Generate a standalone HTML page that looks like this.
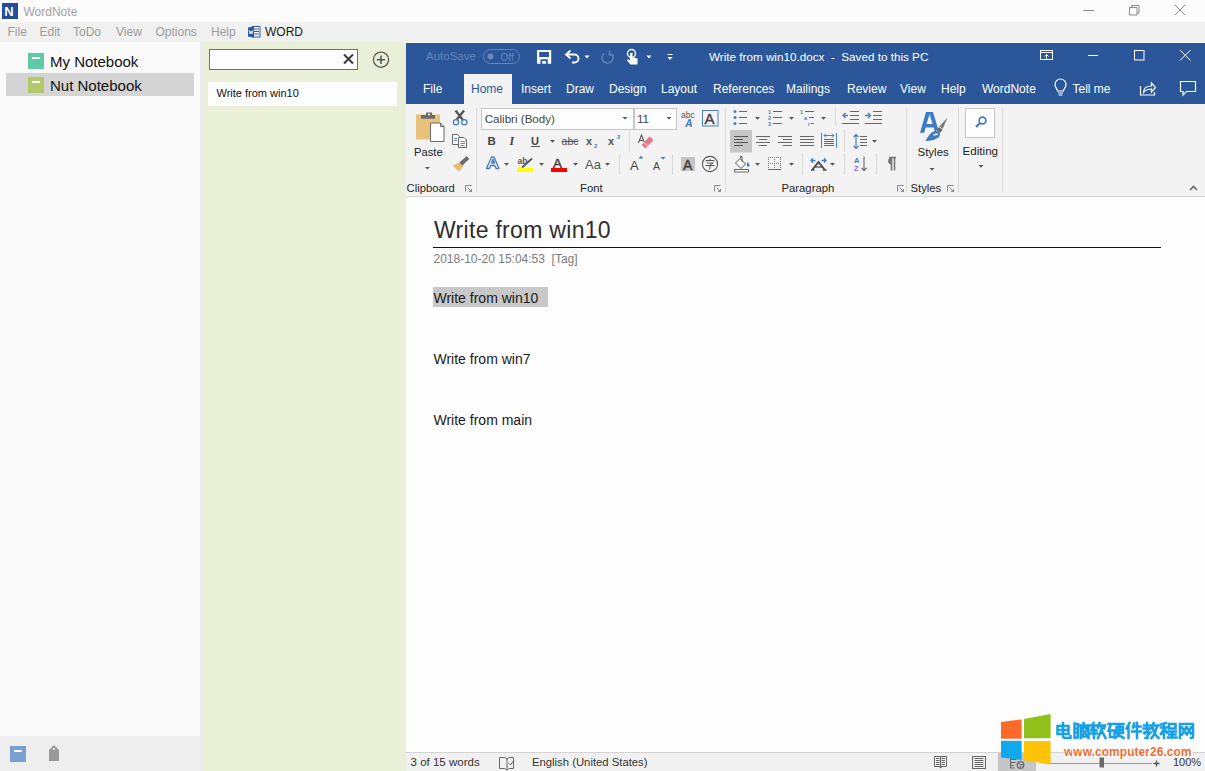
<!DOCTYPE html>
<html><head><meta charset="utf-8">
<style>
*{margin:0;padding:0;box-sizing:border-box}
html,body{width:1205px;height:771px;overflow:hidden;background:#fdfdfd;font-family:"Liberation Sans",sans-serif;position:relative}
.a{position:absolute}
.t{position:absolute;white-space:nowrap;line-height:1}
svg{position:absolute;overflow:visible}
.menu{font-size:12px;color:#9c9c9c;top:25.6px}
.tab{font-size:12px;color:#fff;top:82.8px}
.lbl{font-size:11.3px;color:#262626;top:182.6px}
.sep{position:absolute;width:1px;background:#dadada}
</style></head>
<body>
<!-- ===== WordNote title bar ===== -->
<div class="a" style="left:0;top:0;width:1205px;height:22px;background:#fcfcfc"></div>
<div class="a" style="left:2px;top:3px;width:16px;height:16px;background:#234d9c"></div>
<div class="t" style="left:4.3px;top:5.2px;font-size:13px;font-weight:bold;color:#fff">N</div>
<div class="t" style="left:23.5px;top:5.6px;font-size:12px;color:#a2a2a2">WordNote</div>
<svg style="left:0;top:0" width="1205" height="22">
  <path d="M1083.5 10.5H1094" stroke="#8a8a8a" stroke-width="1"/>
  <path d="M1129.5 7.5h7.5v7.5h-7.5z M1131.5 7.5v-2h7.5v7.5h-2" fill="none" stroke="#8a8a8a" stroke-width="1"/>
  <path d="M1175 5L1185 15M1185 5L1175 15" stroke="#8a8a8a" stroke-width="1"/>
</svg>
<!-- ===== menubar ===== -->
<div class="a" style="left:0;top:22px;width:1205px;height:20px;background:#f0f0f0"></div>
<div class="t menu" style="left:7.5px">File</div>
<div class="t menu" style="left:39.5px">Edit</div>
<div class="t menu" style="left:73px">ToDo</div>
<div class="t menu" style="left:116px">View</div>
<div class="t menu" style="left:155.5px">Options</div>
<div class="t menu" style="left:211px">Help</div>
<svg style="left:0;top:0" width="300" height="42">
  <path d="M252 26.5h8v10.5h-8z" fill="#fff" stroke="#2b579a" stroke-width="1"/>
  <path d="M254 29h5M254 31.5h5M254 34h5" stroke="#2b579a" stroke-width="1"/>
  <path d="M248 27.5l6-1v11l-6-1z" fill="#2b579a"/>
  <path d="M249 30l1 4 1-3 1 3 1-4" fill="none" stroke="#fff" stroke-width="0.8"/>
</svg>
<div class="t" style="left:265px;top:25.6px;font-size:12px;color:#1a1a1a">WORD</div>

<!-- ===== sidebar ===== -->
<div class="a" style="left:0;top:42px;width:200px;height:694px;background:#fafafa"></div>
<div class="a" style="left:200px;top:42px;width:3px;height:729px;background:#ececec"></div>
<div class="a" style="left:28px;top:53px;width:16px;height:16px;background:#5dcaa5"></div>
<div class="a" style="left:32px;top:57px;width:8px;height:2px;background:#fff"></div>
<div class="t" style="left:50px;top:54.3px;font-size:15px;color:#111">My Notebook</div>
<div class="a" style="left:6px;top:73px;width:188px;height:23px;background:#d4d4d4"></div>
<div class="a" style="left:28px;top:77px;width:16px;height:16px;background:#b3c96b"></div>
<div class="a" style="left:32px;top:81px;width:8px;height:2px;background:#fff"></div>
<div class="t" style="left:50px;top:77.9px;font-size:15px;color:#111">Nut Notebook</div>
<div class="a" style="left:0;top:736px;width:200px;height:35px;background:#eeeeee"></div>
<div class="a" style="left:10px;top:746px;width:16px;height:16px;background:#7aa0d2"></div>
<div class="a" style="left:14px;top:750px;width:8px;height:2px;background:#fff"></div>
<svg style="left:0;top:0" width="200" height="771">
  <path d="M49 750l5-5 5 5v11h-10z" fill="#999"/>
  <circle cx="54" cy="749" r="1" fill="#fff"/>
</svg>

<!-- ===== middle panel ===== -->
<div class="a" style="left:203px;top:42px;width:203px;height:729px;background:#e9f0d7"></div>
<div class="a" style="left:209px;top:49px;width:149px;height:21px;background:#fdfdfd;border:1px solid #6f6f6f"></div>
<svg style="left:0;top:0" width="406" height="120">
  <path d="M344 54.5l9 9M353 54.5l-9 9" stroke="#3a3a3a" stroke-width="2"/>
  <circle cx="381" cy="59.7" r="7.6" fill="none" stroke="#5a5a5a" stroke-width="1.3"/>
  <path d="M381 55.5v8.4M376.8 59.7h8.4" stroke="#5a5a5a" stroke-width="1.6"/>
</svg>
<div class="a" style="left:208px;top:82px;width:189px;height:24px;background:#fdfdfd"></div>
<div class="t" style="left:216.5px;top:88.2px;font-size:11px;color:#111">Write from win10</div>

<!-- ===== Word window ===== -->
<div class="a" style="left:406px;top:43px;width:799px;height:61px;background:#2b579a"></div>
<div class="a" style="left:406px;top:104px;width:799px;height:92px;background:#f3f3f3"></div>
<div class="a" style="left:406px;top:196px;width:799px;height:1px;background:#d5d5d5"></div>
<div class="a" style="left:406px;top:197px;width:799px;height:555px;background:#fdfdfd"></div>
<div class="a" style="left:406px;top:752px;width:799px;height:19px;background:#f1f1f1;border-top:1px solid #d3d3d3"></div>


<!-- Word title bar -->
<div class="t" style="left:426px;top:51.2px;font-size:11.5px;color:#6283b9">AutoSave</div>
<div class="a" style="left:483px;top:49px;width:37px;height:15px;border:1px solid #6684b8;border-radius:8px"></div>
<div class="t" style="left:500.5px;top:52.5px;font-size:10px;color:#6a89bd">Off</div>
<svg style="left:0;top:0" width="1205" height="104">
  <circle cx="490.5" cy="56.5" r="3" fill="#6a89bd"/>
  <!-- save -->
  <path d="M537 50h14.2v13.8H537z M539.2 52v5h9.8v-5z M540.5 59.3v4.5h1.8v-2.8h3.6v2.8h1.8v-4.5z" fill="#fff" fill-rule="evenodd"/>
  <!-- undo -->
  <path d="M567 54.5h7.5a4 4 0 0 1 0 8h-2.5" fill="none" stroke="#fff" stroke-width="1.8"/>
  <path d="M570.5 50.5l-4.5 4 4.5 4" fill="none" stroke="#fff" stroke-width="1.8"/>
  <path d="M584.5 55.5h5l-2.5 3z" fill="#fff"/>
  <!-- redo disabled -->
  <path d="M604 53.5a5.5 5.5 0 1 0 7 0" fill="none" stroke="#5f7fb5" stroke-width="1.6"/>
  <path d="M609.5 50.5v4.5h4.5" fill="none" stroke="#5f7fb5" stroke-width="1.6"/>
  <!-- touch -->
  <circle cx="631.5" cy="53.5" r="4" fill="none" stroke="#fff" stroke-width="1.4"/>
  <path d="M630 53.5v7l-2-1.5-1 1.5 3.5 4h7v-6l-5-1.5v-4.5z" fill="#fff"/>
  <path d="M646.5 55.5h5l-2.5 3z" fill="#fff"/>
  <!-- customize -->
  <path d="M667.5 54.5h5" stroke="#fff" stroke-width="1"/>
  <path d="M667.5 57h5l-2.5 3z" fill="#fff"/>
  <!-- controls -->
  <rect x="1040.5" y="50.5" width="12" height="9" fill="none" stroke="#fff" stroke-width="1"/>
  <path d="M1040.5 52.5h12M1046.5 59.5v-5M1044.5 56.5l2-2 2 2" fill="none" stroke="#fff" stroke-width="1"/>
  <path d="M1088 55.5h10" stroke="#fff" stroke-width="1"/>
  <rect x="1134.5" y="50.5" width="9.5" height="9.5" fill="none" stroke="#fff" stroke-width="1"/>
  <path d="M1180 50l10.5 10.5M1190.5 50L1180 60.5" stroke="#fff" stroke-width="1"/>
  <!-- home tab -->
  <rect x="464" y="74" width="48" height="30" fill="#f3f3f3"/>
  <!-- bulb -->
  <path d="M1057.5 91c0-2-2.5-3.5-2.5-6.5a5.5 5.5 0 0 1 11 0c0 3-2.5 4.5-2.5 6.5z" fill="none" stroke="#fff" stroke-width="1.2"/>
  <path d="M1058 93h5M1058.5 95h4" stroke="#fff" stroke-width="1.2"/>
  <!-- share -->
  <path d="M1140.5 86v9h14v-3" fill="none" stroke="#fff" stroke-width="1.2"/>
  <path d="M1143.5 92.5c0-4 3-6.5 8-6.5v-3l4 4.5-4 4.5v-3c-4 0-6 1-8 3.5z" fill="none" stroke="#fff" stroke-width="1.2"/>
  <!-- comment -->
  <path d="M1180.5 81.5h15v10h-9l-3.5 3.5v-3.5h-2.5z" fill="none" stroke="#fff" stroke-width="1.2"/>
</svg>
<div class="t" style="left:709px;top:50.8px;font-size:11.7px;color:#fff">Write from win10.docx&nbsp; - &nbsp;Saved to this PC</div>
<div class="t tab" style="left:423px">File</div>
<div class="t tab" style="left:471px;color:#2b579a">Home</div>
<div class="t tab" style="left:521px">Insert</div>
<div class="t tab" style="left:566px">Draw</div>
<div class="t tab" style="left:609px">Design</div>
<div class="t tab" style="left:661px">Layout</div>
<div class="t tab" style="left:713px">References</div>
<div class="t tab" style="left:786px">Mailings</div>
<div class="t tab" style="left:847px">Review</div>
<div class="t tab" style="left:900px">View</div>
<div class="t tab" style="left:941px">Help</div>
<div class="t tab" style="left:982px">WordNote</div>
<div class="t tab" style="left:1072.5px">Tell me</div>
<!-- ===== RIBBON ===== -->
<svg style="left:0;top:0" width="1205" height="200">
 <g id="clip">
  <rect x="416" y="114.5" width="24" height="25" fill="#e8c17a"/>
  <path d="M421 115h14v3.7h-14z" fill="#6b6b6b"/>
  <path d="M426 115v-2.5h6v2.5z" fill="#6b6b6b"/>
  <circle cx="429" cy="114.6" r="1" fill="#f3f3f3"/>
  <path d="M430.5 123h10l3.5 3.5v15h-13.5z" fill="#fdfdfd" stroke="#6b6b6b" stroke-width="1"/>
  <path d="M440.5 123v3.5h3.5" fill="none" stroke="#6b6b6b" stroke-width="1"/>
  <path d="M425 167h5l-2.5 2.6z" fill="#5a5a5a"/>
  <!-- scissors -->
  <path d="M455.5 110.5l7.5 9.5M464 110.5l-7.5 9.5" stroke="#555" stroke-width="2.3"/>
  <circle cx="456" cy="122.3" r="2.6" fill="none" stroke="#4a7ec0" stroke-width="1.3"/>
  <circle cx="464.4" cy="122.3" r="2.6" fill="none" stroke="#4a7ec0" stroke-width="1.3"/>
  <!-- copy -->
  <path d="M452.5 134.5h5l2 2v8h-7z" fill="#fdfdfd" stroke="#666" stroke-width="1"/>
  <path d="M454 138.5h3M454 140.5h3" stroke="#4a7ec0" stroke-width="0.9"/>
  <path d="M458.5 137.5h5.5l2.5 2.5v7.5h-8z" fill="#fdfdfd" stroke="#666" stroke-width="1"/>
  <path d="M460.5 141.5h4.5M460.5 143.5h4.5M460.5 145.5h4" stroke="#4a7ec0" stroke-width="0.9"/>
  <!-- painter -->
  <path d="M468 157.5l-6 5.5" stroke="#6b6b6b" stroke-width="3.8"/>
  <path d="M461.5 160.5l3 3-3 3-3-3z" fill="#6b6b6b"/>
  <path d="M459.5 162.5l4 4-4.5 5-6.5-6z" fill="#e5bd72"/>
 </g>
 <!-- launchers -->
 <g fill="none" stroke="#8a8a8a" stroke-width="1">
  <path d="M465.5 191.5v-6h6M467.5 187.5l4 4M471.5 189v2.5h-2.5"/>
  <path d="M714.5 191.5v-6h6M716.5 187.5l4 4M720.5 189v2.5h-2.5"/>
  <path d="M897.5 191.5v-6h6M899.5 187.5l4 4M903.5 189v2.5h-2.5"/>
  <path d="M947.5 191.5v-6h6M949.5 187.5l4 4M953.5 189v2.5h-2.5"/>
 </g>
 <!-- separators -->
 <g stroke="#d8d8d8" stroke-width="1">
  <path d="M476.5 108v84M725.5 108v84M906.5 108v84M958.5 108v84M1002.5 108v84"/>
  <path d="M629.5 131v21M619.5 155v20M672.5 155v20"/>
  <path d="M835.5 108v17M844.5 129v23M802.5 153v22M844.5 153v22M876.5 153v22"/>
 </g>
 <!-- font combos -->
 <rect x="481.5" y="108.5" width="152" height="21" fill="#fdfdfd" stroke="#c6c6c6"/>
 <rect x="634.5" y="108.5" width="42" height="21" fill="#fdfdfd" stroke="#c6c6c6"/>
 <path d="M622.5 117h5l-2.5 2.6z" fill="#555"/>
 <path d="M666.5 117h5l-2.5 2.6z" fill="#555"/>
 <!-- abc A -->
 <text x="681" y="118" font-size="8.5" fill="#555" font-family="Liberation Sans">abc</text>
 <text x="685" y="126.5" font-size="10.5" font-weight="bold" font-style="italic" fill="#3f7ac3" font-family="Liberation Sans">A</text>
 <rect x="702.5" y="110.5" width="15.5" height="15.5" fill="none" stroke="#4a7ec0" stroke-width="1"/>
 <text x="704.5" y="124.3" font-size="15" fill="#444" stroke="#444" stroke-width="0.4" font-family="Liberation Sans">A</text>
 <!-- row2 -->
 <text x="487.5" y="145" font-size="11.5" font-weight="bold" fill="#444" font-family="Liberation Sans">B</text>
 <text x="509.5" y="145" font-size="12" font-weight="bold" font-style="italic" fill="#444" font-family="Liberation Serif">I</text>
 <text x="531" y="144.7" font-size="11" font-weight="bold" fill="#444" font-family="Liberation Sans">U</text>
 <path d="M531 146.5h9" stroke="#555" stroke-width="1"/>
 <path d="M550 140h5l-2.5 2.8z" fill="#555"/>
 <text x="561.5" y="145" font-size="10.5" fill="#555" font-family="Liberation Sans" textLength="17">abc</text>
 <path d="M561.5 141.5h17" stroke="#555" stroke-width="1"/>
 <text x="586" y="145.3" font-size="11" font-weight="bold" fill="#555" font-family="Liberation Sans">x</text>
 <text x="594" y="148" font-size="6" font-weight="bold" fill="#4a7ec0" font-family="Liberation Sans">2</text>
 <text x="608" y="145.3" font-size="11" font-weight="bold" fill="#555" font-family="Liberation Sans">x</text>
 <text x="617" y="139" font-size="6" font-weight="bold" fill="#4a7ec0" font-family="Liberation Sans">2</text>
 <!-- eraser -->
 <path d="M638.5 143l3-8 3 8M639.6 140.5h3.8" fill="none" stroke="#555" stroke-width="1.1"/>
 <path d="M649.5 136.5l4 3.5-8 8.5-4-3.5z" fill="#e6788e"/>
 <path d="M643.5 142.3l4 3.6" stroke="#f3f3f3" stroke-width="1"/>
 <!-- row3 -->
 <path d="M486.5 168.5l5-11.5h2.5l5 11.5h-3l-1.2-3h-4.1l-1.2 3z M491.5 163h3l-1.5-3.8z" fill="#e9eff8" stroke="#4a7ec0" stroke-width="1.3" stroke-linejoin="round"/>
 <path d="M504 163h5l-2.5 2.8z" fill="#555"/>
 <text x="517.5" y="163.5" font-size="8.5" font-weight="bold" fill="#555" font-family="Liberation Sans">ab</text>
 <path d="M532 158.5l-10 9" stroke="#5a5a5a" stroke-width="2"/>
 <rect x="517" y="168" width="16" height="4" fill="#ffff00"/>
 <path d="M539 163h5l-2.5 2.8z" fill="#555"/>
 <text x="553" y="168" font-size="13.5" fill="#444" stroke="#444" stroke-width="0.5" font-family="Liberation Sans">A</text>
 <rect x="551" y="168" width="16" height="4" fill="#ff0000"/>
 <path d="M573 163h5l-2.5 2.8z" fill="#555"/>
 <text x="585" y="169" font-size="13" fill="#555" font-family="Liberation Sans">Aa</text>
 <path d="M605 163h5l-2.5 2.8z" fill="#555"/>
 <text x="630" y="170" font-size="13" fill="#444" font-family="Liberation Sans">A</text>
 <path d="M638.5 158.5h5l-2.5-2.8z" fill="#4a7ec0"/>
 <text x="653" y="170" font-size="10.5" fill="#444" font-family="Liberation Sans">A</text>
 <path d="M660.5 157h5l-2.5 2.8z" fill="#4a7ec0"/>
 <rect x="681" y="157" width="14" height="14" fill="#c6c6c6"/>
 <text x="683" y="169.5" font-size="14" fill="#444" stroke="#444" stroke-width="0.5" font-family="Liberation Sans">A</text>
 <circle cx="710" cy="164" r="7.6" fill="none" stroke="#555" stroke-width="1.1"/>
 <path d="M706 161.5v-1h8v1M710 159v1M707 163h6l-3 2v3.5l-1 .5M705.5 165.5h9" fill="none" stroke="#555" stroke-width="1"/>
 <!-- paragraph row1 -->
 <g fill="#4a7ec0">
  <circle cx="735" cy="111.5" r="1.5"/><circle cx="735" cy="117.5" r="1.5"/><circle cx="735" cy="123.5" r="1.5"/>
 </g>
 <path d="M739 111.5h8M739 117.5h8M739 123.5h8" stroke="#666" stroke-width="1"/>
 <path d="M755 117h5l-2.5 2.8z" fill="#555"/>
 <text x="768" y="114" font-size="5.5" font-weight="bold" fill="#4a7ec0" font-family="Liberation Sans">1</text>
 <text x="768" y="120" font-size="5.5" font-weight="bold" fill="#4a7ec0" font-family="Liberation Sans">2</text>
 <text x="768" y="126" font-size="5.5" font-weight="bold" fill="#4a7ec0" font-family="Liberation Sans">3</text>
 <path d="M773 111.5h9M773 117.5h9M773 123.5h9" stroke="#666" stroke-width="1"/>
 <path d="M789 117h5l-2.5 2.8z" fill="#555"/>
 <text x="800" y="114" font-size="5.5" font-weight="bold" fill="#4a7ec0" font-family="Liberation Sans">1</text>
 <text x="804" y="120" font-size="5.5" font-weight="bold" fill="#4a7ec0" font-family="Liberation Sans">a</text>
 <text x="808" y="126" font-size="5.5" font-weight="bold" fill="#4a7ec0" font-family="Liberation Sans">i</text>
 <path d="M805 111.5h9M809 117.5h5M811 123.5h3" stroke="#666" stroke-width="1"/>
 <path d="M821 117h5l-2.5 2.8z" fill="#555"/>
 <!-- indent -->
 <path d="M850 111.5h9M850 115.5h9M850 119.5h9M842 123.5h17" stroke="#666" stroke-width="1"/>
 <path d="M848 115.5h-5M845.5 113l-2.5 2.5 2.5 2.5" fill="none" stroke="#4a7ec0" stroke-width="1.4"/>
 <path d="M873 111.5h9M873 115.5h9M873 119.5h9M865 123.5h17" stroke="#666" stroke-width="1"/>
 <path d="M865 115.5h5M868 113l2.5 2.5-2.5 2.5" fill="none" stroke="#4a7ec0" stroke-width="1.4"/>
 <!-- row2 align -->
 <rect x="730" y="130" width="22" height="22.5" fill="#c6c6c6"/>
 <path d="M734 136.5h14M734 139.5h9M734 142.5h14M734 145.5h9" stroke="#555" stroke-width="1"/>
 <path d="M756 136.5h14M759 139.5h8M756 142.5h14M759 145.5h8" stroke="#666" stroke-width="1"/>
 <path d="M778 136.5h14M783 139.5h9M778 142.5h14M783 145.5h9" stroke="#666" stroke-width="1"/>
 <path d="M800 136.5h14M800 139.5h14M800 142.5h14M800 145.5h14" stroke="#666" stroke-width="1"/>
 <path d="M821.5 133v15M836.5 133v15" stroke="#4a7ec0" stroke-width="1"/>
 <path d="M824 135.5h10M826 133.5l-2 2 2 2M832 133.5l2 2-2 2" fill="none" stroke="#4a7ec0" stroke-width="1"/>
 <path d="M824 139.5h10M824 141.5h10M824 143.5h10M824 145.5h10" stroke="#666" stroke-width="1"/>
 <path d="M856 134.5v14M853.5 137l2.5-2.5 2.5 2.5M853.5 146l2.5 2.5 2.5-2.5" fill="none" stroke="#4a7ec0" stroke-width="1.2"/>
 <path d="M860 136.5h7M860 139.5h7M860 142.5h7M860 145.5h7" stroke="#666" stroke-width="1"/>
 <path d="M872 140h5l-2.5 2.8z" fill="#555"/>
 <!-- row3 -->
 <path d="M734.5 169.5h14v2.5h-14z" fill="#fdfdfd" stroke="#666" stroke-width="1"/>
 <path d="M740 158.5l5.5 5.5-4.5 4.5-5.5-5.5z" fill="#fdfdfd" stroke="#555" stroke-width="1"/>
 <path d="M740.5 158v-1.5h1.5v5" fill="none" stroke="#555" stroke-width="1"/>
 <path d="M747 162c1.5 1 2.5 2 2.5 3.5a1.3 1.3 0 0 1-2.6 0z" fill="#4a7ec0"/>
 <path d="M755 163h5l-2.5 2.8z" fill="#555"/>
 <g fill="#777">
  <path d="M768 157h1v1h-1zM770 157h1v1h-1zM772 157h1v1h-1zM774 157h1v1h-1zM776 157h1v1h-1zM778 157h1v1h-1zM780 157h1v1h-1z"/>
  <path d="M768 163h1v1h-1zM770 163h1v1h-1zM772 163h1v1h-1zM774 163h1v1h-1zM776 163h1v1h-1zM778 163h1v1h-1zM780 163h1v1h-1z"/>
  <path d="M768 159h1v1h-1zM768 161h1v1h-1zM768 165h1v1h-1zM768 167h1v1h-1zM774 159h1v1h-1zM774 161h1v1h-1zM774 165h1v1h-1zM774 167h1v1h-1zM780 159h1v1h-1zM780 161h1v1h-1zM780 165h1v1h-1zM780 167h1v1h-1z"/>
 </g>
 <path d="M768 169.5h13" stroke="#666" stroke-width="1"/>
 <path d="M789 163h5l-2.5 2.8z" fill="#555"/>
 <path d="M812.5 169.5l6-7.5 6 7.5" fill="none" stroke="#4a4a4a" stroke-width="2"/><path d="M814.5 167h8" stroke="#4a4a4a" stroke-width="1.2"/><path d="M811 170h3.5M823 170h3.5" stroke="#4a4a4a" stroke-width="1.3"/>
 <path d="M811 160.5h4.5M826 160.5h-4.5M813 158.3l-2 2.2 2 2.2M824 158.3l2 2.2-2 2.2" fill="none" stroke="#4a7ec0" stroke-width="1.3"/>
 <path d="M830 163h5l-2.5 2.8z" fill="#555"/>
 <text x="854" y="163" font-size="7.5" font-weight="bold" fill="#4a7ec0" font-family="Liberation Sans">A</text>
 <text x="854" y="171" font-size="7.5" font-weight="bold" fill="#9b6bc8" font-family="Liberation Sans">Z</text>
 <path d="M864 156.5v14M861.5 168l2.5 2.5 2.5-2.5" fill="none" stroke="#666" stroke-width="1.1"/>
 <path d="M891.5 157.5v13M894.5 157.5v13M889 157.5h7" stroke="#777" stroke-width="1.6"/><path d="M891.5 157.5a3.4 3.6 0 0 0 0 7.2z" fill="#777"/>
 <!-- styles -->
 <path d="M920 132.7l6-20.7h7l6.3 20.7h-4.2l-1.4-5.2h-8.1l-1.4 5.2z M926.5 124h6.1l-3.05-9.8z" fill="#3f7bc4" fill-rule="evenodd"/>
 <path d="M933 136l11-11" stroke="#f3f3f3" stroke-width="3"/>
 <path d="M947.5 117.5l-4.8 11.5-3.2-2.8z" fill="#7a7a7a"/>
 <path d="M939.3 127l3.3 3-2.8 3-3.3-3z" fill="#666"/>
 <path d="M939.5 133c-1-2-3.5-2.5-6-1.5-3 1.2-5.5 5-8 9.5 4.5 0 10-1 13-3.5 1.5-1.3 1.8-3 1-4.5z" fill="#3f7bc4"/>
 <path d="M933.5 135.3c1.5-1 3-1.3 4.5-.8" stroke="#fdfdfd" stroke-width="1.3"/>
 <path d="M929.5 168h5l-2.5 2.8z" fill="#555"/>
 <!-- editing -->
 <rect x="965.5" y="108.5" width="29" height="29" fill="#fdfdfd" stroke="#c6c6c6"/>
 <circle cx="982.5" cy="120.5" r="3.4" fill="none" stroke="#3f7bc4" stroke-width="1.7"/>
 <path d="M980 123l-4 4" stroke="#3f7bc4" stroke-width="2.2"/>
 <path d="M978.5 165h5l-2.5 2.8z" fill="#555"/>
 <path d="M1190 190l3.5-3.5 3.5 3.5" fill="none" stroke="#666" stroke-width="1.6"/>
</svg>
<div class="t" style="left:414px;top:147.3px;font-size:11.2px;color:#222">Paste</div>
<div class="t lbl" style="left:406.5px">Clipboard</div>
<div class="t lbl" style="left:580px">Font</div>
<div class="t lbl" style="left:781.5px">Paragraph</div>
<div class="t lbl" style="left:910.5px">Styles</div>
<div class="t" style="left:484.7px;top:113.2px;font-size:11.6px;color:#444">Calibri (Body)</div>
<div class="t" style="left:637px;top:113.2px;font-size:11.6px;color:#444">11</div>
<div class="t" style="left:917.5px;top:147.3px;font-size:11.5px;color:#222">Styles</div>
<div class="t" style="left:962.6px;top:145.4px;font-size:11.6px;color:#222">Editing</div>
<!-- ===== DOCUMENT ===== -->
<div class="t" style="left:434px;top:218.6px;font-size:23px;letter-spacing:0.3px;color:#2e2e2e">Write from win10</div>
<div class="a" style="left:433px;top:246.6px;width:728px;height:1.5px;background:#111"></div>
<div class="t" style="left:433.5px;top:252.6px;font-size:12px;color:#7c7c7c">2018-10-20 15:04:53&nbsp;&nbsp;[Tag]</div>
<div class="a" style="left:433px;top:287px;width:115px;height:20px;background:#c8c8c8"></div>
<div class="t" style="left:433.5px;top:290.8px;font-size:14px;color:#1a1a1a">Write from win10</div>
<div class="t" style="left:433.5px;top:351.9px;font-size:14px;color:#1a1a1a">Write from win7</div>
<div class="t" style="left:433.5px;top:412.5px;font-size:14px;color:#1a1a1a">Write from main</div>
<!-- ===== STATUS BAR ===== -->
<div class="t" style="left:410.6px;top:757px;font-size:11.5px;color:#333">3 of 15 words</div>
<svg style="left:0;top:0" width="1205" height="771">
  <path d="M499.5 757.5h5l2.5 1.5 2.5-1.5h4v11h-4l-2.5 1.5-2.5-1.5h-5z M507 759v10" fill="none" stroke="#666" stroke-width="1"/>
  <path d="M508.5 763l2 2 3.5-5" fill="none" stroke="#666" stroke-width="1"/>
  <rect x="998" y="753" width="38" height="18" fill="#c6c6c6"/>
  <path d="M934.5 756.5h12v10h-12z M940.5 757v11" fill="none" stroke="#666" stroke-width="1"/>
  <path d="M936 758.5h3.5M936 760.5h3.5M936 762.5h3.5M936 764.5h3.5M941.5 758.5h3.5M941.5 760.5h3.5M941.5 762.5h3.5M941.5 764.5h3.5" stroke="#666" stroke-width="1"/>
  <path d="M939 767l1.5 1.5 1.5-1.5z" fill="#666"/>
  <rect x="972.5" y="756.5" width="13" height="12" fill="none" stroke="#666" stroke-width="1"/>
  <path d="M974.5 758.5h9M974.5 760.5h9M974.5 762.5h9M974.5 764.5h9M974.5 766.5h9" stroke="#666" stroke-width="1"/>
  <path d="M1010.5 758v10h4M1010.5 759.5h6M1010.5 762.5h5M1010.5 765.5h3" fill="none" stroke="#666" stroke-width="1"/>
  <circle cx="1020.5" cy="765" r="3.3" fill="#c6c6c6" stroke="#666" stroke-width="1.2"/><path d="M1018.5 763c1 1.5 2 2 4 1.5M1020 768c0-2 1-3 3-3.5" fill="none" stroke="#666" stroke-width="1"/>
  <path d="M1041 762.5h5" stroke="#555" stroke-width="1.2"/>
  <path d="M1046 763.5h106" stroke="#9a9a9a" stroke-width="1"/>
  <rect x="1099.5" y="757.5" width="4.5" height="10" fill="#6a6a6a"/>
  <path d="M1153.5 763.5h6M1156.5 760.5v6" stroke="#555" stroke-width="1.3"/>
</svg>
<div class="t" style="left:532px;top:757px;font-size:11.3px;color:#333">English (United States)</div>
<div class="t" style="left:1173px;top:757px;font-size:11px;color:#333">100%</div>
<!-- ===== WATERMARK ===== -->
<svg style="left:0;top:0" width="1205" height="771">
  <path d="M1001 722l20.6-2.6v19.3H1001z" fill="#fc6a2a"/>
  <path d="M1024 719l26.6-4.9v24.2H1024z" fill="#93c11b"/>
  <path d="M1001 740.7h20.6V760L1001 757.5z" fill="#10a9ec"/>
  <path d="M1024 741h26.6v23.4L1024 760.3z" fill="#fec308"/>
  <g fill="none" stroke="#17a0e8" stroke-width="2.5" stroke-linecap="square">
    <!-- 电 -->
    <g transform="translate(1056,722.5)">
      <path d="M1.5 3.5h11v8h-11z M1.5 7.5h11 M7 0.5v13c0 1.5 1 2 3 2h4.5v-2"/>
    </g>
    <!-- 脑 -->
    <g transform="translate(1073,722.5)">
      <path d="M1.5 1v14.5 M1.5 1.5h3.5v13.5h-1.5 M2 6h3 M2 10h3 M10.5 0.5v2 M7.5 3h8 M8 5.5v10 M8 5.5h7.5v10 M9.5 7.5l4.5 5 M14 7.5l-4.5 5 M8.5 14h6.5"/>
    </g>
    <!-- 软 -->
    <g transform="translate(1090,722.5)">
      <path d="M0.5 3h6 M3.5 0.5l-2 7.5h5 M4 5v10.5 M0.5 11h6.5 M9.5 0.5l-1.5 4.5 M9 3h6l-1 3 M11.5 5v2.5l-3.5 8 M11.5 8l4 7.5"/>
    </g>
    <!-- 硬 -->
    <g transform="translate(1108,722.5)">
      <path d="M0.5 1.5h6 M3 1.5l-2.5 7 M2 8h4.5v6.5H2z M7.5 1.5h8 M8.5 4.5h6.5v6H8.5z M8.5 7.5h6.5 M11.5 1.5v9.5c-1 2.5-2.5 3.5-4.5 4.5 M10 12l5.5 3.5"/>
    </g>
    <!-- 件 -->
    <g transform="translate(1125.5,722.5)">
      <path d="M4 0.5L1 6 M3 4v11.5 M8.5 1l-1 4 M8 4h7 M6.5 9h9 M11.5 0.5v15"/>
    </g>
    <!-- 教 -->
    <g transform="translate(1143,722.5)">
      <path d="M1 3h6.5 M4 0.5v5 M0.5 6h8 M6.5 6l-5 5 M1.5 10h6l-3 3v2.5l-2 0 M10.5 0.5l-2 5.5 M9.5 3h6 M14 3.5c-1 5-2.5 9-5.5 12 M10 6c1 4 3 7.5 5.5 9.5"/>
    </g>
    <!-- 程 -->
    <g transform="translate(1160.5,722.5)">
      <path d="M5.5 0.5l-5 1.5 M0.5 5h6 M3.5 1.5v14 M3.5 6.5l-3 5 M4 7l2.5 3 M8.5 1.5h6.5v4.5H8.5z M8 9h7.5 M11.5 9v6 M8.5 12h6.5 M7.5 15h8.5"/>
    </g>
    <!-- 网 -->
    <g transform="translate(1178.5,722.5)">
      <path d="M1.5 15.5v-14h13v12.5c0 1-0.5 1.5-2 1.5 M3.5 5l4 6 M7.5 5l-4 7 M8.5 5l4 6 M12.5 5l-4 7"/>
    </g>
  </g>
  <text x="1064" y="755.5" font-family="Liberation Sans" font-size="12" font-weight="bold" fill="#f46c2d" stroke="#fdfdfd" stroke-width="2.5" paint-order="stroke" textLength="127.5">www.computer26.com</text>
</svg>

</body></html>
